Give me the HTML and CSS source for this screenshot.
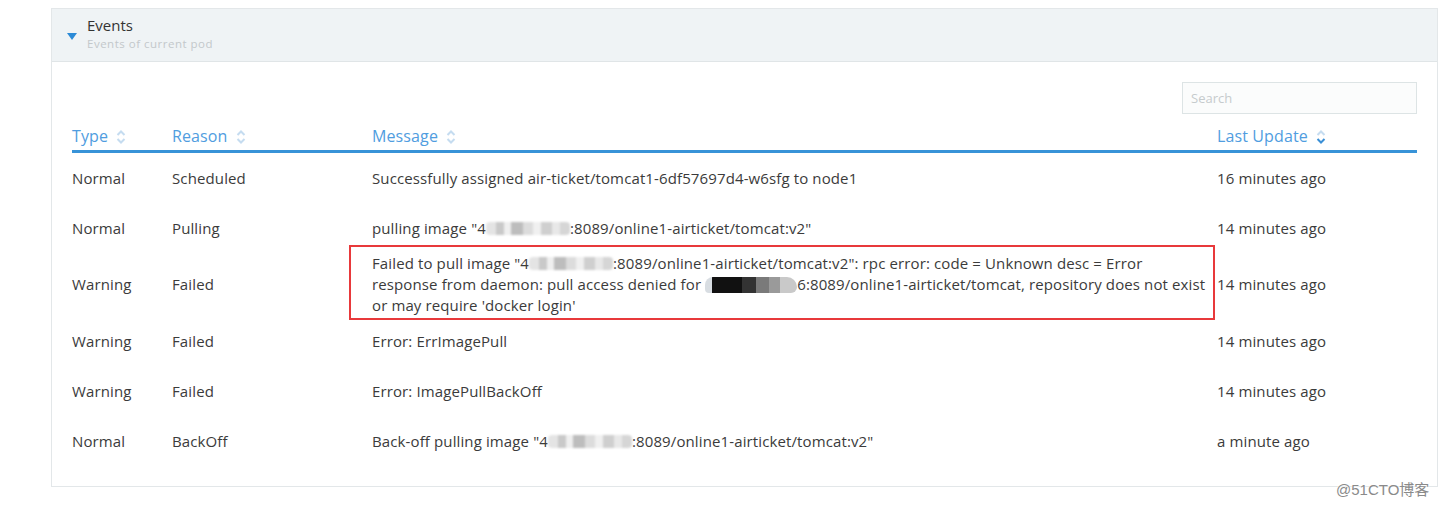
FILE: index.html
```html
<!DOCTYPE html>
<html lang="en">
<head>
<meta charset="UTF-8" />
<title>Events</title>
<link rel="stylesheet" href="styles.css">
</head>
<body>

<section class="panel">
  <div class="panel-head">
    <span class="caret"></span>
    <div>
      <div class="panel-title">Events</div>
      <div class="panel-sub">Events of current pod</div>
    </div>
  </div>

  <div class="panel-body">
    <div class="toolbar">
      <input class="search" type="text" placeholder="Search">
    </div>

    <table class="events">
      <thead>
        <tr>
          <th class="col-type">Type <svg class="sort" viewBox="0 0 10 16"><path d="M1.5 6 5 2.5 8.5 6M1.5 10 5 13.5 8.5 10"/></svg></th>
          <th class="col-reason">Reason <svg class="sort" viewBox="0 0 10 16"><path d="M1.5 6 5 2.5 8.5 6M1.5 10 5 13.5 8.5 10"/></svg></th>
          <th class="col-msg">Message <svg class="sort" viewBox="0 0 10 16"><path d="M1.5 6 5 2.5 8.5 6M1.5 10 5 13.5 8.5 10"/></svg></th>
          <th class="col-time">Last Update <svg class="sort" viewBox="0 0 10 16"><path d="M1.5 6 5 2.5 8.5 6"/><path class="on" d="M1.5 10 5 13.5 8.5 10"/></svg></th>
        </tr>
      </thead>
      <tbody>
        <tr>
          <td>Normal</td>
          <td>Scheduled</td>
          <td>Successfully assigned air-ticket/tomcat1-6df57697d4-w6sfg to node1</td>
          <td>16 minutes ago</td>
        </tr>
        <tr>
          <td>Normal</td>
          <td>Pulling</td>
          <td>pulling image "4<span class="blur"></span>:8089/online1-airticket/tomcat:v2"</td>
          <td>14 minutes ago</td>
        </tr>
        <tr>
          <td>Warning</td>
          <td>Failed</td>
          <td class="marked">Failed to pull image "4<span class="blur"></span>:8089/online1-airticket/tomcat:v2": rpc error: code = Unknown desc = Error<br>response from daemon: pull access denied for <span class="scribble"></span>6:8089/online1-airticket/tomcat, repository does not exist<br>or may require 'docker login'</td>
          <td>14 minutes ago</td>
        </tr>
        <tr>
          <td>Warning</td>
          <td>Failed</td>
          <td>Error: ErrImagePull</td>
          <td>14 minutes ago</td>
        </tr>
        <tr>
          <td>Warning</td>
          <td>Failed</td>
          <td>Error: ImagePullBackOff</td>
          <td>14 minutes ago</td>
        </tr>
        <tr>
          <td>Normal</td>
          <td>BackOff</td>
          <td>Back-off pulling image "4<span class="blur"></span>:8089/online1-airticket/tomcat:v2"</td>
          <td>a minute ago</td>
        </tr>
      </tbody>
    </table>
  </div>
</section>

<div class="watermark">@51CTO博客</div>

</body>
</html>
```

FILE: styles.css
```css
body {
  margin: 8px 6px 0 51px;
  background: #fff;
  font-family: "Open Sans", "Noto Sans", sans-serif;
  color: #3b3b3b;
}
.panel {
  width: 1385px;
  border: 1px solid #e3e7e9;
}
.panel-head {
  display: flex;
  align-items: flex-start;
  height: 52px;
  background: #eff3f5;
  border-bottom: 1px solid #e0e5e7;
}
.caret {
  width: 0;
  height: 0;
  margin: 24px 10px 0 15px;
  border-left: 5px solid transparent;
  border-right: 5px solid transparent;
  border-top: 7px solid #2b8ad6;
}
.panel-title {
  margin-top: 6px;
  font-size: 15px;
  line-height: 20px;
  color: #333;
}
.panel-sub {
  margin-top: 1px;
  font-size: 11.5px;
  line-height: 16px;
  letter-spacing: 0.5px;
  color: #c3c8cb;
}
.panel-body {
  padding: 20px 20px 20px 20px;
}
.toolbar {
  display: flex;
  justify-content: flex-end;
}
.search {
  width: 235px;
  height: 32px;
  box-sizing: border-box;
  padding: 0 8px;
  border: 1px solid #dde4e5;
  background: #fbfcfc;
  font-family: inherit;
  font-size: 13px;
  color: #333;
  outline: none;
}
.search::placeholder {
  color: #c6cbcd;
}
.events {
  width: 1345px;
  border-collapse: collapse;
  table-layout: fixed;
  font-size: 15px;
  letter-spacing: 0.12px;
}
.events th {
  padding: 12px 0 3px;
  border-bottom: 3px solid #3893d8;
  text-align: left;
  font-weight: normal;
  font-size: 16px;
  line-height: 21px;
  color: #509de0;
  white-space: nowrap;
}
.col-type { width: 100px; }
.col-reason { width: 200px; }
.col-msg { width: 845px; }
.col-time { width: 200px; }
.sort {
  width: 10px;
  height: 16px;
  margin-left: 4px;
  vertical-align: -3px;
  fill: none;
  stroke: #c5dcf0;
  stroke-width: 2;
}
.sort .on {
  stroke: #3a8fd6;
}
.events td {
  height: 50px;
  padding: 0;
  line-height: 21px;
  vertical-align: middle;
  white-space: nowrap;
}
.events td.marked {
  position: relative;
}
.marked::after {
  content: "";
  position: absolute;
  left: -23px;
  right: 2px;
  top: -8px;
  bottom: -4px;
  border: 2px solid #e8393b;
}
.blur {
  display: inline-block;
  width: 84px;
  height: 13px;
  vertical-align: -1px;
  background: linear-gradient(90deg, #e4e4e4 0 12%, #c9c9c9 12% 22%, #efefef 22% 30%, #bdbdbd 30% 44%, #dcdcdc 44% 56%, #f0f0f0 56% 66%, #cfcfcf 66% 78%, #e8e8e8 78% 88%, #d6d6d6 88%);
  filter: blur(1.2px);
  border-radius: 4px;
}
.scribble {
  display: inline-block;
  width: 92px;
  height: 16px;
  vertical-align: -3px;
  background: linear-gradient(90deg, #d8dde2 0 8%, #111 8% 40%, #333 40% 55%, #7a7a7a 55% 70%, #9a9a9a 70% 82%, #c9c9c9 82%);
  border-radius: 8px 10px 6px 4px;
}
.watermark {
  position: absolute;
  left: 1336px;
  top: 478px;
  font-family: "Liberation Sans", "Noto Sans CJK SC", sans-serif;
  font-size: 15px;
  color: #8a8a8a;
  text-shadow: 0 0 2px #fff, 0 0 2px #fff;
}
```
